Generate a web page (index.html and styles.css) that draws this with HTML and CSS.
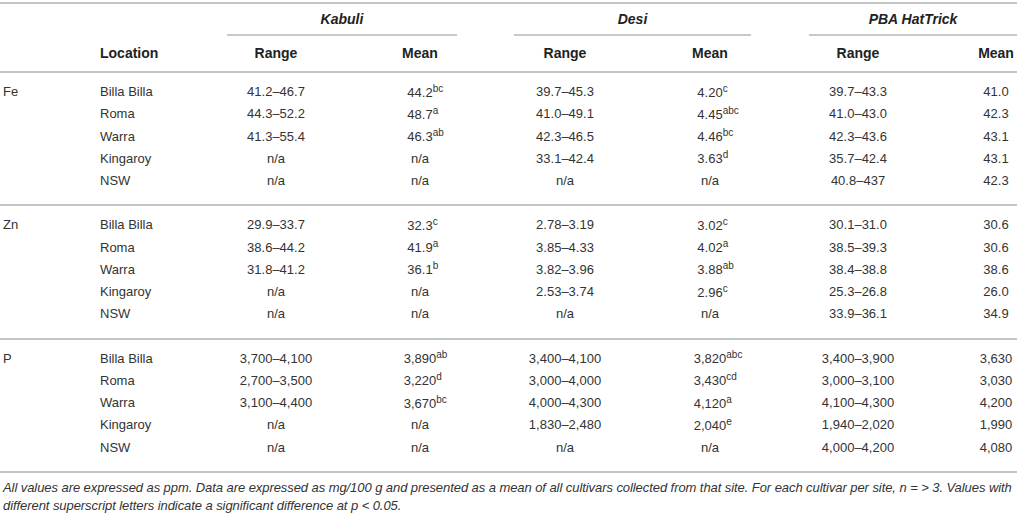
FILE: index.html
```html
<!DOCTYPE html>
<html lang="en">
<head>
<meta charset="utf-8">
<title>Mineral content by location</title>
<link rel="stylesheet" href="styles.css">
</head>
<body>
<div class="wrap">
<table class="data">
  <colgroup>
    <col class="w-el"><col class="w-loc">
    <col class="w-kr"><col class="w-km"><col class="w-g1">
    <col class="w-dr"><col class="w-dm"><col class="w-g2">
    <col class="w-pr"><col class="w-pm">
  </colgroup>
  <thead>
    <tr class="grp">
      <th></th><th></th>
      <th colspan="2" class="gh">Kabuli</th><th></th>
      <th colspan="2" class="gh">Desi</th><th></th>
      <th colspan="2" class="gh">PBA HatTrick</th>
    </tr>
    <tr class="sub">
      <th></th><th class="loc">Location</th>
      <th class="rng">Range</th><th class="km">Mean</th><th></th>
      <th class="rng">Range</th><th class="dm">Mean</th><th></th>
      <th class="rng">Range</th><th class="pm">Mean</th>
    </tr>
  </thead>
  <tbody>
    <tr><td class="el">Fe</td><td class="loc">Billa Billa</td><td class="rng">41.2–46.7</td><td class="km">44.2<span class="sup">bc</span></td><td></td><td class="rng">39.7–45.3</td><td class="dm">4.20<span class="sup">c</span></td><td></td><td class="rng">39.7–43.3</td><td class="pm">41.0</td></tr>
    <tr><td class="el"></td><td class="loc">Roma</td><td class="rng">44.3–52.2</td><td class="km">48.7<span class="sup">a</span></td><td></td><td class="rng">41.0–49.1</td><td class="dm">4.45<span class="sup">abc</span></td><td></td><td class="rng">41.0–43.0</td><td class="pm">42.3</td></tr>
    <tr><td class="el"></td><td class="loc">Warra</td><td class="rng">41.3–55.4</td><td class="km">46.3<span class="sup">ab</span></td><td></td><td class="rng">42.3–46.5</td><td class="dm">4.46<span class="sup">bc</span></td><td></td><td class="rng">42.3–43.6</td><td class="pm">43.1</td></tr>
    <tr><td class="el"></td><td class="loc">Kingaroy</td><td class="rng">n/a</td><td class="km">n/a</td><td></td><td class="rng">33.1–42.4</td><td class="dm">3.63<span class="sup">d</span></td><td></td><td class="rng">35.7–42.4</td><td class="pm">43.1</td></tr>
    <tr><td class="el"></td><td class="loc">NSW</td><td class="rng">n/a</td><td class="km">n/a</td><td></td><td class="rng">n/a</td><td class="dm">n/a</td><td></td><td class="rng">40.8–437</td><td class="pm">42.3</td></tr>
  </tbody>
  <tbody>
    <tr><td class="el">Zn</td><td class="loc">Billa Billa</td><td class="rng">29.9–33.7</td><td class="km">32.3<span class="sup">c</span></td><td></td><td class="rng">2.78–3.19</td><td class="dm">3.02<span class="sup">c</span></td><td></td><td class="rng">30.1–31.0</td><td class="pm">30.6</td></tr>
    <tr><td class="el"></td><td class="loc">Roma</td><td class="rng">38.6–44.2</td><td class="km">41.9<span class="sup">a</span></td><td></td><td class="rng">3.85–4.33</td><td class="dm">4.02<span class="sup">a</span></td><td></td><td class="rng">38.5–39.3</td><td class="pm">30.6</td></tr>
    <tr><td class="el"></td><td class="loc">Warra</td><td class="rng">31.8–41.2</td><td class="km">36.1<span class="sup">b</span></td><td></td><td class="rng">3.82–3.96</td><td class="dm">3.88<span class="sup">ab</span></td><td></td><td class="rng">38.4–38.8</td><td class="pm">38.6</td></tr>
    <tr><td class="el"></td><td class="loc">Kingaroy</td><td class="rng">n/a</td><td class="km">n/a</td><td></td><td class="rng">2.53–3.74</td><td class="dm">2.96<span class="sup">c</span></td><td></td><td class="rng">25.3–26.8</td><td class="pm">26.0</td></tr>
    <tr><td class="el"></td><td class="loc">NSW</td><td class="rng">n/a</td><td class="km">n/a</td><td></td><td class="rng">n/a</td><td class="dm">n/a</td><td></td><td class="rng">33.9–36.1</td><td class="pm">34.9</td></tr>
  </tbody>
  <tbody>
    <tr><td class="el">P</td><td class="loc">Billa Billa</td><td class="rng">3,700–4,100</td><td class="km">3,890<span class="sup">ab</span></td><td></td><td class="rng">3,400–4,100</td><td class="dm">3,820<span class="sup">abc</span></td><td></td><td class="rng">3,400–3,900</td><td class="pm">3,630</td></tr>
    <tr><td class="el"></td><td class="loc">Roma</td><td class="rng">2,700–3,500</td><td class="km">3,220<span class="sup">d</span></td><td></td><td class="rng">3,000–4,000</td><td class="dm">3,430<span class="sup">cd</span></td><td></td><td class="rng">3,000–3,100</td><td class="pm">3,030</td></tr>
    <tr><td class="el"></td><td class="loc">Warra</td><td class="rng">3,100–4,400</td><td class="km">3,670<span class="sup">bc</span></td><td></td><td class="rng">4,000–4,300</td><td class="dm">4,120<span class="sup">a</span></td><td></td><td class="rng">4,100–4,300</td><td class="pm">4,200</td></tr>
    <tr><td class="el"></td><td class="loc">Kingaroy</td><td class="rng">n/a</td><td class="km">n/a</td><td></td><td class="rng">1,830–2,480</td><td class="dm">2,040<span class="sup">e</span></td><td></td><td class="rng">1,940–2,020</td><td class="pm">1,990</td></tr>
    <tr><td class="el"></td><td class="loc">NSW</td><td class="rng">n/a</td><td class="km">n/a</td><td></td><td class="rng">n/a</td><td class="dm">n/a</td><td></td><td class="rng">4,000–4,200</td><td class="pm">4,080</td></tr>
  </tbody>
</table>
<p class="note"><span class="line">All values are expressed as ppm. Data are expressed as mg/100 g and presented as a mean of all cultivars collected from that site. For each cultivar per site, n = &gt; 3. Values with</span> <span class="line">different superscript letters indicate a significant difference at p &lt; 0.05.</span></p>
</div>
</body>
</html>
```

FILE: styles.css
```css
html, body {
  margin: 0;
  padding: 0;
  background: #ffffff;
}

body {
  font-family: "Liberation Sans", Arial, sans-serif;
  color: #333333;
}

.wrap {
  width: 1017px;
  padding-top: 2px;
}

.data {
  width: 1017px;
  table-layout: fixed;
  border-collapse: separate;
  border-spacing: 0;
  border-top: 2px solid #c4c4c4;
}

.w-el  { width: 100px; }
.w-loc { width: 127px; }
.w-kr  { width: 98px; }
.w-km  { width: 132px; }
.w-g1  { width: 57px; }
.w-dr  { width: 102px; }
.w-dm  { width: 135px; }
.w-g2  { width: 58px; }
.w-pr  { width: 98px; }
.w-pm  { width: 110px; }

th, td {
  padding: 0;
  white-space: nowrap;
}

thead th {
  font-size: 14px;
  font-weight: bold;
  color: #222222;
  vertical-align: middle;
}

.grp th {
  height: 30px;
  font-style: italic;
  text-align: center;
}

.grp th.gh {
  border-bottom: 2px solid #c8c8c8;
}

.sub th {
  height: 34px;
  padding-bottom: 1px;
  border-bottom: 2px solid #c4c4c4;
}

td {
  font-size: 13px;
  height: 22.25px;
  line-height: 16px;
  vertical-align: middle;
}

.el  { text-align: left; padding-left: 3px; }
.loc { text-align: left; }
.rng { text-align: center; }
.km  { text-align: center; padding-left: 58px; }
.dm  { text-align: center; padding-left: 53px; }
.pm  { text-align: center; padding-left: 68px; }

tbody tr:first-child td {
  padding-top: 8px;
}

tbody tr:last-child td {
  padding-bottom: 12px;
  border-bottom: 2px solid #c4c4c4;
}

.sup {
  display: inline-block;
  width: 0;
  font-size: 10px;
  line-height: 10px;
  vertical-align: 5px;
  text-align: left;
  overflow: visible;
}

.note {
  margin: 0;
  padding: 6px 0 0 3px;
  font-size: 13px;
  line-height: 18px;
  font-style: italic;
  color: #333333;
}

.note .line {
  display: block;
  white-space: nowrap;
  letter-spacing: -0.07px;
}
```
